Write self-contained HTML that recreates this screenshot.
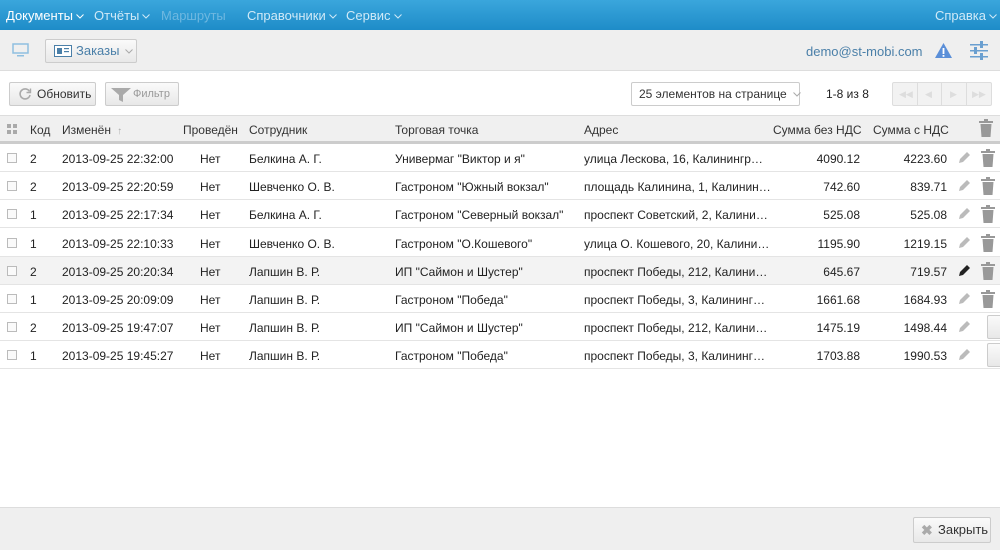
<!DOCTYPE html>
<html><head><meta charset="utf-8"><style>
*{box-sizing:border-box;margin:0;padding:0}
body{width:1000px;height:550px;overflow:hidden;font-family:"Liberation Sans",sans-serif;font-size:12px;color:#222;background:#fff;position:relative}
.top{position:absolute;left:0;top:0;width:1000px;height:30px;background:linear-gradient(#3aa6dc,#1e8cc8);color:#cfe9f7;font-size:13px}
.top span{position:absolute;top:8px;white-space:nowrap}
.chev{display:inline-block;width:8px;height:5px;margin-left:3px;vertical-align:middle}
.tb{position:absolute;top:30px;left:0;width:1000px;height:41px;background:#efefef;border-bottom:1px solid #ddd}
.btn{position:absolute;border:1px solid #ccc;border-radius:2px;background:linear-gradient(#fafafa,#e8e8e8);height:24px;font-size:12px;line-height:22px;color:#333;white-space:nowrap}
.hdr{position:absolute;top:115px;left:0;width:1000px;height:29px;background:#f0f0f0;border-top:1px solid #ddd;border-bottom:3px solid #ccc;color:#333}
.c{position:absolute;white-space:nowrap}
.row{position:absolute;left:0;width:1000px;height:28px;border-bottom:1px solid #e4e4e4}
.row .c{top:8px}
.cb{position:absolute;left:7px;top:9px;width:10px;height:10px;border:1px solid #bbb;background:#fafafa}
.r{text-align:right}
.foot{position:absolute;top:507px;left:0;width:1000px;height:43px;background:#efefef;border-top:1px solid #ddd}
</style></head><body>
<svg width="0" height="0" style="position:absolute"><defs><symbol id="ch" viewBox="0 0 8 5"><path d="M.5 .5L4 4 7.5 .5" fill="none" stroke="currentColor" stroke-width="1"/></symbol></defs></svg>
<div class="top">
<span style="left:6px;color:#fff">Документы<svg class="chev"><use href="#ch"/></svg></span>
<span style="left:94px">Отчёты<svg class="chev"><use href="#ch"/></svg></span>
<span style="left:161px;color:#6fb8e0">Маршруты</span>
<span style="left:247px">Справочники<svg class="chev"><use href="#ch"/></svg></span>
<span style="left:346px">Сервис<svg class="chev"><use href="#ch"/></svg></span>
<span style="left:935px">Справка<svg class="chev"><use href="#ch"/></svg></span>
</div>
<div class="tb">
<svg style="position:absolute;left:12px;top:13px" width="17" height="15"><rect x="1" y="1" width="15" height="9" fill="none" stroke="#8fbfe0" stroke-width="1.5"/><rect x="5" y="12" width="7" height="1.5" fill="#8fbfe0"/></svg>
<div class="btn" style="left:45px;top:9px;width:92px;height:24px;color:#4a7fa8;font-size:13px;padding-left:30px">Заказы<svg class="chev" style="color:#aaa;margin-left:6px"><use href="#ch"/></svg>
<svg style="position:absolute;left:8px;top:5px" width="18" height="12"><rect x=".5" y=".5" width="17" height="11" fill="#fff" stroke="#4a7fa8"/><rect x="3" y="3" width="5" height="6" fill="#4a7fa8"/><rect x="10" y="3" width="5" height="1.2" fill="#4a7fa8"/><rect x="10" y="6" width="5" height="1.2" fill="#4a7fa8"/></svg></div>
<span class="c" style="left:806px;top:14px;color:#4a7fa8;font-size:13px">demo@st-mobi.com</span>
<svg style="position:absolute;left:934px;top:12px" width="19" height="17"><path d="M9.5 1 L18 16 L1 16Z" fill="#5b8fd8"/><rect x="8.6" y="6" width="1.8" height="6" fill="#fff"/><rect x="8.6" y="13" width="1.8" height="1.8" fill="#fff"/></svg>
<svg style="position:absolute;left:970px;top:11px" width="18" height="20"><g fill="#6a9fd0"><rect x="0" y="3" width="18" height="1.5"/><rect x="0" y="9" width="18" height="1.5"/><rect x="0" y="15" width="18" height="1.5"/><rect x="10" y="0" width="3" height="7"/><rect x="4" y="6" width="3" height="7"/><rect x="10" y="12" width="3" height="7"/></g></svg>
</div>
<div class="btn" style="left:9px;top:82px;width:87px;padding-left:27px">Обновить
<svg style="position:absolute;left:8px;top:4px" width="14" height="14"><path d="M11.5 4.5A5 5 0 1 0 12 8" fill="none" stroke="#aaa" stroke-width="1.6"/><path d="M12.5 1.5v4h-4" fill="none" stroke="#aaa" stroke-width="1.4"/></svg></div>
<div class="btn" style="left:105px;top:82px;width:74px;padding-left:27px;color:#999;font-size:11px">Фильтр
<svg style="position:absolute;left:5px;top:4px" width="20" height="15"><path d="M0 1h20l-8 7v7l-4-2v-5z" fill="#aaa"/></svg></div>
<div class="btn" style="left:631px;top:82px;width:169px;background:#fff;padding-left:7px;font-size:12px;color:#333">25 элементов на странице<svg class="chev" style="color:#aaa;margin-left:6px"><use href="#ch"/></svg></div>
<span class="c" style="left:826px;top:87px">1-8 из 8</span>
<div class="btn" style="left:892px;top:82px;width:100px;background:#f2f2f2;border-color:#ddd"><div style="position:absolute;left:24px;top:0;width:25px;height:22px;border-left:1px solid #ddd;border-right:1px solid #ddd"></div><div style="position:absolute;left:73px;top:0;height:22px;border-left:1px solid #ddd"></div>
<span style="position:absolute;left:6px;top:0;color:#ddd;font-size:9px">◀◀</span><span style="position:absolute;left:32px;top:0;color:#ddd;font-size:9px">◀</span><span style="position:absolute;left:57px;top:0;color:#ddd;font-size:9px">▶</span><span style="position:absolute;left:79px;top:0;color:#ddd;font-size:9px">▶▶</span></div>
<div class="hdr">
<svg style="position:absolute;left:7px;top:8px" width="10" height="10"><g fill="#aaa"><rect x="0" y="0" width="4" height="4"/><rect x="6" y="0" width="4" height="4"/><rect x="0" y="6" width="4" height="4"/><rect x="6" y="6" width="4" height="4"/></g></svg>
<span class="c" style="left:30px;top:7px">Код</span>
<span class="c" style="left:62px;top:7px">Изменён <span style="color:#aaa;font-size:10px">&nbsp;↑</span></span>
<span class="c" style="left:183px;top:7px">Проведён</span>
<span class="c" style="left:249px;top:7px">Сотрудник</span>
<span class="c" style="left:395px;top:7px">Торговая точка</span>
<span class="c" style="left:584px;top:7px">Адрес</span>
<span class="c" style="left:773px;top:7px">Сумма без НДС</span>
<span class="c" style="left:873px;top:7px">Сумма с НДС</span>
<svg style="position:absolute;left:979px;top:3px" width="14" height="18"><rect x="0" y="2" width="14" height="2" fill="#999"/><rect x="5" y="0" width="4" height="2" fill="#999"/><path d="M1.5 5h11l-1 13h-9z" fill="#999"/></svg>
</div>
<div id="rows"></div>
<div class="foot"><div class="btn" style="left:913px;top:9px;width:78px;height:26px;line-height:24px;padding-left:24px;font-size:13px"><span style="position:absolute;left:7px;top:0;color:#aaa;font-size:14px;font-weight:bold">✖</span>Закрыть</div></div>
<script>
var d=[["2","2013-09-25 22:32:00","Белкина А. Г.","Универмаг \"Виктор и я\"","улица Лескова, 16, Калинингр…","4090.12","4223.60"],
["2","2013-09-25 22:20:59","Шевченко О. В.","Гастроном \"Южный вокзал\"","площадь Калинина, 1, Калинин…","742.60","839.71"],
["1","2013-09-25 22:17:34","Белкина А. Г.","Гастроном \"Северный вокзал\"","проспект Советский, 2, Калини…","525.08","525.08"],
["1","2013-09-25 22:10:33","Шевченко О. В.","Гастроном \"О.Кошевого\"","улица О. Кошевого, 20, Калини…","1195.90","1219.15"],
["2","2013-09-25 20:20:34","Лапшин В. Р.","ИП \"Саймон и Шустер\"","проспект Победы, 212, Калини…","645.67","719.57"],
["1","2013-09-25 20:09:09","Лапшин В. Р.","Гастроном \"Победа\"","проспект Победы, 3, Калининг…","1661.68","1684.93"],
["2","2013-09-25 19:47:07","Лапшин В. Р.","ИП \"Саймон и Шустер\"","проспект Победы, 212, Калини…","1475.19","1498.44"],
["1","2013-09-25 19:45:27","Лапшин В. Р.","Гастроном \"Победа\"","проспект Победы, 3, Калининг…","1703.88","1990.53"]];
var h="";d.forEach(function(r,i){var y=144+Math.round(i*28.2);var pc=i==4?"#222":"#bbb";
h+='<div class="row" style="top:'+y+'px;'+(i==4?'background:#f3f3f3':'')+'"><div class="cb"></div>'+
'<span class="c" style="left:30px">'+r[0]+'</span><span class="c" style="left:62px">'+r[1]+'</span><span class="c" style="left:200px">Нет</span>'+
'<span class="c" style="left:249px">'+r[2]+'</span><span class="c" style="left:395px">'+r[3]+'</span><span class="c" style="left:584px">'+r[4]+'</span>'+
'<span class="c r" style="left:760px;width:100px">'+r[5]+'</span><span class="c r" style="left:847px;width:100px">'+r[6]+'</span>'+
'<svg style="position:absolute;left:957px;top:7px" width="14" height="14"><path d="M2 12l1-4 7-7 3 3-7 7z" fill="'+pc+'"/></svg>'+
(i<6?'<svg style="position:absolute;left:981px;top:5px" width="14" height="18"><rect x="0" y="2" width="14" height="2" fill="#999"/><rect x="5" y="0" width="4" height="2" fill="#999"/><path d="M1.5 5h11l-1 13h-9z" fill="#999"/></svg>':'<div class="btn" style="left:987px;top:2px;width:20px;height:24px"></div>')+'</div>';});
document.getElementById("rows").innerHTML=h;
</script>
</body></html>
